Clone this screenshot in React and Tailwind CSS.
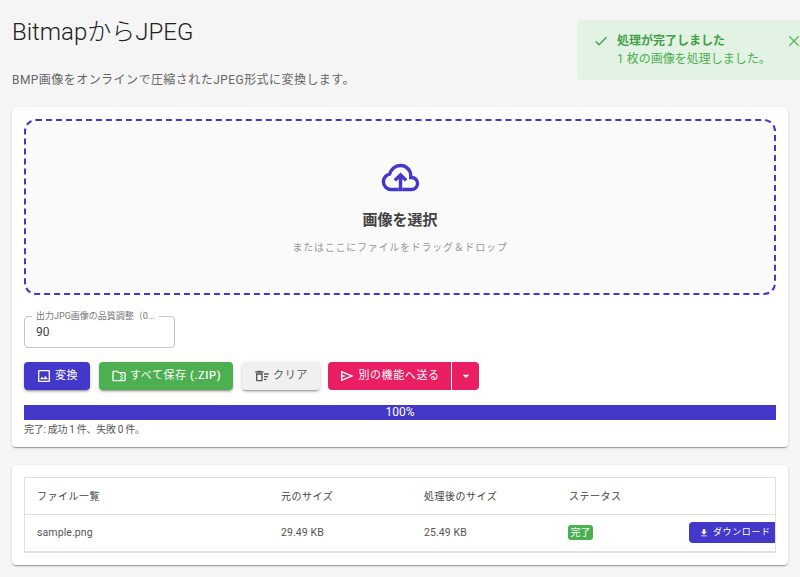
const FONT = "font-['Roboto','Noto_Sans_CJK_JP',sans-serif]";

const Icon = ({ d, className }) => (
  <svg viewBox="0 0 24 24" fill="currentColor" className={className}>
    <path d={d} />
  </svg>
);

const CloudUpload = ({ className }) => (
  <svg viewBox="0 0 24 24" className={className}>
    <path
      d="M11 19H6.5Q4.6 19 3.3 17.7 2 16.4 2 14.55 2 12.9 3 11.65 4 10.4 5.6 10.05 6.2 7.9 7.9 6.45 9.6 5 12 5 14.5 5 16.25 6.75 18 8.5 18 11v1h.5q1.45 0 2.47.98 1.03.97 1.03 2.52 0 1.45-1.03 2.47Q19.95 19 18.5 19H13"
      fill="none"
      stroke="currentColor"
      strokeWidth="2"
    />
    <path d="M11 20v-7.15l-1.6 1.55L8 13l4-4 4 4-1.4 1.4-1.6-1.55V20z" fill="currentColor" />
  </svg>
);

const ICONS = {
  image: 'M19 5v14H5V5h14m0-2H5c-1.1 0-2 .9-2 2v14c0 1.1.9 2 2 2h14c1.1 0 2-.9 2-2V5c0-1.1-.9-2-2-2zm-4.86 8.86l-3 3.87L9 13.14 6 17h12l-3.86-5.14z',
  zip: 'M20 6h-8l-2-2H4c-1.1 0-2 .9-2 2v12c0 1.1.9 2 2 2h16c1.1 0 2-.9 2-2V8c0-1.1-.9-2-2-2zm-4 10h2v-2h-2v-2h2v-2h-2V8h4v10h-4v-2zm0 0h-2v2H4V6h5.17l2 2H14v2h2v2h-2v2h2v2z',
  sweep: 'M15 16h4v2h-4zm0-8h7v2h-7zm0 4h6v2h-6zM3 18c0 1.1.9 2 2 2h6c1.1 0 2-.9 2-2V8H3v10zm2-8h6v8H5v-8zm5-6H6L5 5H2v2h12V5h-3z',
  send: 'M3 20V4l19 8-19 8zm2-3 11.85-5L5 7v3.5l6 1.5-6 1.5V17z',
  drop: 'M7 10l5 5 5-5z',
  download: 'M19 9h-4V3H9v6H5l7 7 7-7zM5 18v2h14v-2H5z',
  check: 'M9 16.17L4.83 12l-1.42 1.41L9 19 21 7l-1.41-1.41z',
  close: 'M19 6.41L17.59 5 12 10.59 6.41 5 5 6.41 10.59 12 5 17.59 6.41 19 12 13.41 17.59 19 19 17.59 13.41 12z',
};

const CARD = 'bg-white rounded shadow-[0_2px_1px_-1px_rgba(0,0,0,0.2),0_1px_1px_0_rgba(0,0,0,0.14),0_1px_3px_0_rgba(0,0,0,0.12)]';
const BTN = 'h-7 flex items-center justify-center gap-[3px] rounded text-[11px] tracking-[0.6px]';
const BTN_SHADOW = 'shadow-[0_3px_1px_-2px_rgba(0,0,0,0.2),0_2px_2px_0_rgba(0,0,0,0.14),0_1px_5px_0_rgba(0,0,0,0.12)]';

export default function App() {
  return (
    <div className={`${FONT} relative w-[800px] h-[577px] overflow-hidden bg-[#f5f5f5] px-3`}>
      <h1 className="pt-[17px] text-[24px] leading-[30px] font-light text-[#212121]">BitmapからJPEG</h1>
      <p className="mt-[24px] text-[12px] leading-[18px] tracking-[0.45px] text-[#666]">
        BMP画像をオンラインで圧縮されたJPEG形式に変換します。
      </p>

      <section className={`${CARD} mt-[18px] h-[340px] p-3`}>
        <div className="h-[176px] rounded-xl border-2 border-dashed border-[#4338ca] bg-[#fafafa] flex flex-col items-center pt-[36px]">
          <CloudUpload className="w-[41px] h-[41px] text-[#4338ca]" />
          <div className="mt-[11px] text-[15px] leading-[22px] font-bold text-[#424242]">画像を選択</div>
          <div className="mt-[9px] text-[10px] leading-[15px] tracking-[0.75px] text-[#999]">またはここにファイルをドラッグ＆ドロップ</div>
        </div>

        <div className="relative mt-[21px] w-[151px] h-[32px] rounded border border-[#c4c4c4] px-[11px] flex items-center text-[12px] text-[#444]">
          90
          <span className="absolute -top-[6px] left-[7px] bg-white px-1 text-[9px] leading-[11px] text-[#777] whitespace-nowrap">出力JPG画像の品質調整（0...</span>
        </div>

        <div className="mt-[14px] flex items-center">
          <button className={`${BTN} ${BTN_SHADOW} w-[66px] bg-[#4338ca] text-white`}>
            <Icon d={ICONS.image} className="w-[16px] h-[16px]" />
            変換
          </button>
          <button className={`${BTN} ${BTN_SHADOW} ml-[9px] w-[134px] bg-[#4caf50] text-white`}>
            <Icon d={ICONS.zip} className="w-[16px] h-[16px]" />
            <span>すべて保存 <span className="font-medium">(.ZIP)</span></span>
          </button>
          <button className={`${BTN} ${BTN_SHADOW} ml-[9px] w-[78px] bg-[#f0f0f0] text-[#555]`}>
            <Icon d={ICONS.sweep} className="w-[16px] h-[16px]" />
            クリア
          </button>
          <div className="ml-[8px] flex">
            <button className={`${BTN} w-[123px] rounded-r-none bg-[#e91e63] text-white tracking-[0.4px]`}>
              <Icon d={ICONS.send} className="w-[16px] h-[16px]" />
              別の機能へ送る
            </button>
            <button className={`${BTN} w-[28px] rounded-l-none border-l border-white bg-[#e91e63] text-white`}>
              <Icon d={ICONS.drop} className="w-[16px] h-[16px]" />
            </button>
          </div>
        </div>

        <div className="mt-[15px] h-[15px] bg-[#4338ca] text-white text-[12px] leading-[15px] text-center">100%</div>
        <p className="mt-[3px] text-[10px] leading-[14px] tracking-[-0.3px] text-[#555]">完了: 成功 1 件、失敗 0 件。</p>
      </section>

      <section className={`${CARD} mt-[18px] h-[100px] p-3`}>
        <div className="border border-[#e0e0e0] border-b-2 overflow-hidden">
          <table className="w-full table-fixed border-collapse text-[10.5px]">
            <colgroup>
              <col className="w-[256px]" />
              <col className="w-[143px]" />
              <col className="w-[145px]" />
              <col className="w-[120px]" />
              <col />
            </colgroup>
            <thead>
              <tr className="h-[36px] border-b border-[#e0e0e0] text-left text-[10px] text-[#444] tracking-[0.5px]">
                <th className="pl-3 pt-px font-normal">ファイル一覧</th>
                <th className="pt-px font-normal">元のサイズ</th>
                <th className="pt-px font-normal">処理後のサイズ</th>
                <th className="pt-px font-normal">ステータス</th>
                <th />
              </tr>
            </thead>
            <tbody>
              <tr className="h-[37px] text-[#555] tracking-[0.1px]">
                <td className="pl-3">sample.png</td>
                <td>29.49 KB</td>
                <td>25.49 KB</td>
                <td>
                  <span className="inline-block h-[15px] -ml-px px-[2.5px] rounded-[3px] bg-[#4caf50] text-white text-[10px] leading-[15px]">完了</span>
                </td>
                <td>
                  <button className="h-[21px] w-[96px] flex items-center gap-1 rounded bg-[#4338ca] pl-[10px] text-white text-[9px] tracking-[0.6px] whitespace-nowrap">
                    <Icon d={ICONS.download} className="w-[10px] h-[10px] shrink-0" />
                    ダウンロード
                  </button>
                </td>
              </tr>
            </tbody>
          </table>
        </div>
      </section>

      <div className="absolute top-[20px] left-[577px] w-[240px] h-[60px] rounded bg-[#e2f2e3] flex text-[#4caf50]">
        <Icon d={ICONS.check} className="ml-[16px] mt-[13px] w-[16px] h-[16px] text-[#43a047]" />
        <div className="ml-[8px] mt-[12px] text-[12px] leading-[18px] whitespace-nowrap">
          <div className="font-bold text-[#43a047]">処理が完了しました</div>
          <div>1 枚の画像を処理しました。</div>
        </div>
        <Icon d={ICONS.close} className="absolute left-[208px] top-[12px] w-[18px] h-[18px] text-[#66bb6a]" />
      </div>
    </div>
  );
}
